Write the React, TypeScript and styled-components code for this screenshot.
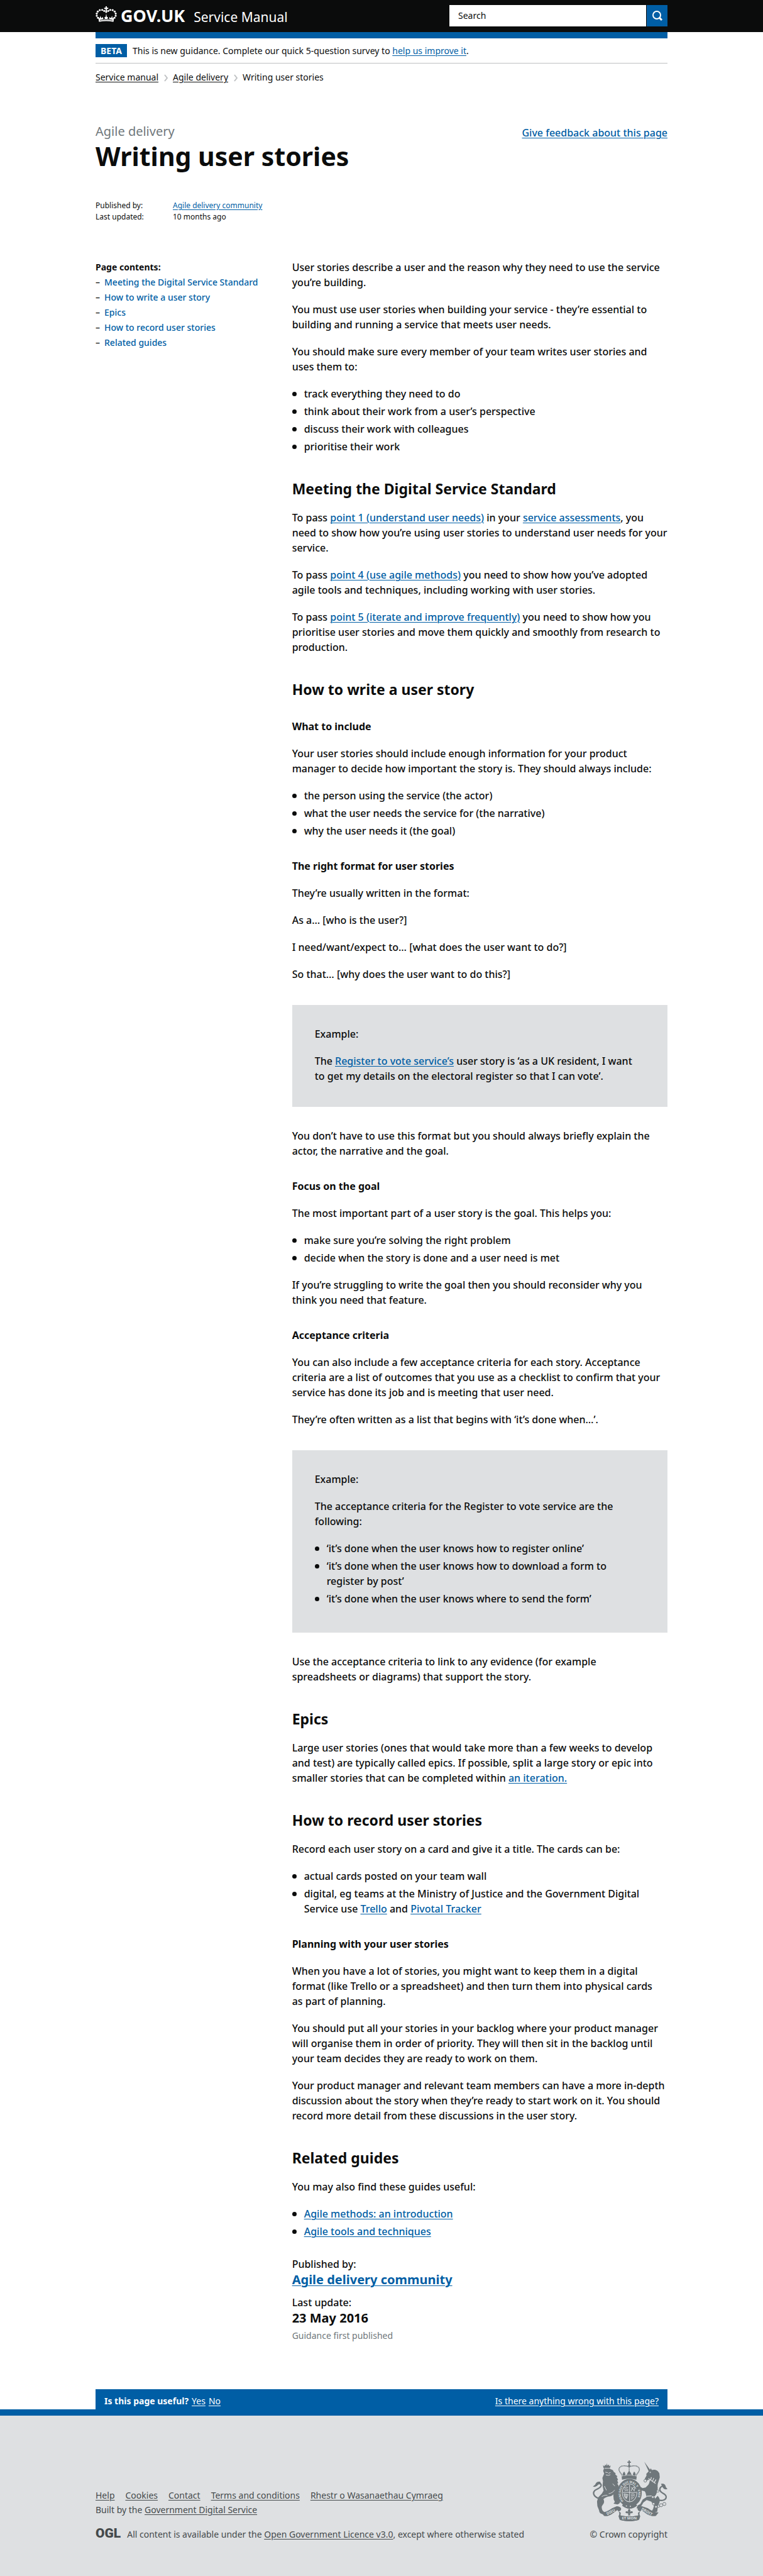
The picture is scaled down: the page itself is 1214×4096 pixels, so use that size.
import React from 'react';
import styled, { createGlobalStyle, css } from 'styled-components';

const color = {
  black: '#0b0c0c',
  blue: '#005ea5',
  white: '#ffffff',
  panel: '#dee0e2',
  border: '#bfc1c3',
  secondary: '#6f777b',
  footer: '#454a4c',
};

const GlobalStyle = createGlobalStyle`
  *, *::before, *::after { box-sizing: border-box; }
  html { -webkit-text-size-adjust: 100%; }
  body {
    margin: 0;
    background: ${color.white};
    color: ${color.black};
    font-family: "Noto Sans", "Open Sans", sans-serif;
    font-size: 16px;
    line-height: 24px;
  }
  h1, h2, h3, p, ul, ol, dl, dd { margin: 0; padding: 0; }
  ul, ol { list-style: none; }
`;

const small = css`
  font-size: 14px;
  line-height: 20px;
  font-weight: 400;
`;

const Container = styled.div`
  width: calc(100% - 30px);
  max-width: 910px;
  margin: 0 auto;
`;

const Link = styled.a<{ $tone?: string }>`
  color: ${(p) => p.$tone ?? color.blue};
  text-decoration: underline;
  text-decoration-thickness: 1px;
  text-underline-offset: 2px;
`;

/* Header */

const Masthead = styled.header`
  background: ${color.black};
  color: ${color.white};
`;

const MastheadRow = styled(Container)`
  display: flex;
  align-items: flex-start;
  justify-content: space-between;
  gap: 30px;
  padding: 8px 0 9px;
`;

const Brand = styled.a`
  display: flex;
  align-items: baseline;
  color: ${color.white};
  text-decoration: none;
  white-space: nowrap;
`;

const BrandMark = styled.svg`
  width: 34px;
  height: 25px;
  margin-right: 6px;
`;

const BrandName = styled.span`
  font-size: 27px;
  line-height: 34px;
  font-weight: 700;
  margin-right: 14px;
`;

const Product = styled.span`
  font-size: 21px;
  line-height: 28px;
`;

const SearchForm = styled.form`
  display: flex;
  gap: 1px;
  flex: 0 1 347px;
  height: 34px;
`;

const SearchInput = styled.input`
  flex: 1;
  min-width: 0;
  border: 0;
  border-radius: 0;
  padding: 0 14px;
  background: ${color.white};
  color: ${color.black};
  font: inherit;
  ${small}
  &::placeholder { color: ${color.black}; opacity: 1; }
`;

const SearchButton = styled.button`
  display: flex;
  align-items: center;
  justify-content: center;
  width: 33px;
  border: 0;
  padding: 0;
  background: ${color.blue};
  color: ${color.white};
  cursor: pointer;
`;

/* Phase banner and breadcrumbs */

const PhaseBanner = styled.div`
  display: flex;
  gap: 9px;
  border-top: 10px solid ${color.blue};
  border-bottom: 1px solid ${color.border};
  padding: 9px 0;
  ${small}
  line-height: 21px;
`;

const PhaseTag = styled.strong`
  width: 50px;
  background: ${color.blue};
  color: ${color.white};
  font-weight: 700;
  text-align: center;
`;

const Crumbs = styled.ol`
  display: flex;
  margin-top: 12px;
  ${small}
`;

const Crumb = styled.li`
  display: flex;
  align-items: center;
`;

const Chevron = styled.svg`
  width: 6px;
  height: 12px;
  margin: 2px 8px 0 9px;
`;

/* Page heading */

const TitleRow = styled.div`
  display: flex;
  justify-content: space-between;
  align-items: flex-start;
  margin-top: 62px;
  font-weight: 500;
`;

const Topic = styled.p`
  color: ${color.secondary};
  font-size: 20px;
  font-weight: 400;
  line-height: 28px;
`;

const Title = styled.h1`
  font-size: 41px;
  line-height: 50px;
  font-weight: 700;
`;

const Feedback = styled.p`
  padding-top: 4px;
`;

const Metadata = styled.dl`
  display: grid;
  grid-template-columns: 123px 1fr;
  margin-top: 45px;
  font-size: 12px;
  line-height: 18px;
`;

/* Body */

const Columns = styled.div`
  display: grid;
  grid-template-columns: 1fr 2fr;
  gap: 14px;
  margin-top: 59px;
`;

const Contents = styled.nav`
  font-size: 14px;
  line-height: 24px;
  font-weight: 500;
`;

const ContentsTitle = styled.h2`
  font-size: 14px;
  line-height: 24px;
  font-weight: 700;
`;

const ContentsItem = styled.li`
  display: flex;
  &::before { content: '–'; width: 14px; }
  a { color: ${color.blue}; text-decoration: none; }
`;

const Article = styled.article`
  min-width: 0;
  font-weight: 500;
`;

const Prose = styled.div`
  > p { margin-bottom: 19px; }
`;

const H2 = styled.h2`
  margin: 40px 0 19px;
  font-size: 23px;
  line-height: 30px;
  font-weight: 700;
`;

const H3 = styled.h3`
  margin: 32px 0 19px;
  font-size: 16px;
  line-height: 24px;
  font-weight: 700;
`;

const Bullets = styled.ul`
  margin-bottom: 19px;

  li {
    margin-bottom: 4px;
    padding-left: 19px;
    text-indent: -19px;
  }
  li::before {
    content: '';
    display: inline-block;
    width: 7px;
    height: 7px;
    margin-right: 12px;
    border-radius: 50%;
    background: ${color.black};
    vertical-align: 2px;
  }
`;

const Example = styled.aside`
  margin: 37px 0 34px;
  padding: 34px 36px 18px;
  background: ${color.panel};

  p { margin-bottom: 19px; }
  ul { margin-bottom: 24px; }
`;

const History = styled.dl`
  margin-top: 28px;

  dd {
    font-size: 20px;
    line-height: 26px;
    font-weight: 700;
  }
  dd + dt { margin-top: 11px; }
`;

const HistoryNote = styled.p`
  margin-top: 5px;
  color: ${color.secondary};
  ${small}
`;

/* Survey bar and footer */

const SurveyBar = styled(Container)`
  display: flex;
  justify-content: space-between;
  margin-top: 75px;
  padding: 9px 14px 3px;
  background: ${color.blue};
  color: ${color.white};
  ${small}
`;

const SurveyLinks = styled.p`
  display: flex;
  gap: 5px;
`;

const Footer = styled.footer`
  border-top: 10px solid ${color.blue};
  background: ${color.panel};
  color: ${color.footer};
  ${small}
`;

const FooterRow = styled(Container)`
  display: flex;
  justify-content: space-between;
  align-items: flex-end;
  padding: 71px 0 60px;
`;

const FooterLinks = styled.ul`
  display: flex;
  flex-wrap: wrap;
  gap: 17px;
  margin-bottom: 3px;
`;

const Licence = styled.div`
  display: flex;
  align-items: baseline;
  gap: 10px;
  margin-top: 17px;
`;

const OglMark = styled.span`
  font-family: Roboto, sans-serif;
  font-size: 21px;
  line-height: 20px;
  font-weight: 900;
`;

const Copyright = styled.div`
  display: flex;
  flex-direction: column;
  align-items: flex-end;
  gap: 11px;
`;

const CrestArt = styled.svg`
  width: 119px;
  height: 97px;
`;

const crownBeads: Array<[number, number]> = [
  [12, 57], [6, 47], [6, 36], [11, 26], [21, 19], [33, 18], [43, 23],
  [94, 57], [100, 47], [100, 36], [95, 26], [85, 19], [73, 18], [63, 23],
];

function Crown() {
  return (
    <BrandMark viewBox="0 0 106 78" aria-hidden="true" fill="#fff">
      {crownBeads.map(([x, y]) => (
        <circle key={`${x}-${y}`} cx={x} cy={y} r="5" />
      ))}
      <path d="M50 0h6v7h7v6h-7v12h-6V13h-7V7h7z" />
      <circle cx="53" cy="28" r="5" />
      <path d="M17 77 13 52l8 8 3-13 5 12 8-6 1 11 9-2-3-9h6l2-11 1-6 1 6 2 11h6l-3 9 9 2 1-11 8 6 5-12 3 13 8-8-4 25c-24-5-48-5-72 0z" />
      <path d="M22 69c20-4 42-4 62 0" stroke={color.black} strokeWidth="3" fill="none" />
    </BrandMark>
  );
}

function Crest() {
  const tone = color.secondary;
  return (
    <CrestArt viewBox="45 65 375 307" aria-hidden="true" fill={tone}>
      {/* central crown */}
      <path d="M225 66h6v6h6v6h-6v10h-6V78h-6v-6h6z" />
      <circle cx="228" cy="93" r="6" />
      <path d="M228 98C210 90 181 90 177 108c-2 12 9 22 17 34M228 98c18-8 47-8 51 10 2 12-9 22-17 34M228 98v36" fill="none" stroke={tone} strokeWidth="5" strokeDasharray="5 2" />
      <path d="M197 143c-3-9 0-17 6-21 5 6 6 12 6 18l7-3c3-8 8-14 12-18 4 4 9 10 12 18l7 3c0-6 1-12 6-18 6 4 9 12 6 21-20-6-42-6-62 0z" />
      <path d="M190 146c24-7 52-7 76 0l-2 17c-24-7-48-7-72 0z" />
      {/* garter and shield */}
      <ellipse cx="230" cy="229" rx="49" ry="58" fill="none" stroke={tone} strokeWidth="25" />
      <ellipse cx="230" cy="229" rx="37" ry="45" fill={tone} stroke={color.panel} strokeWidth="3" />
      <path d="M230 188v84M196 227h68" stroke={color.panel} strokeWidth="3" />
      <g stroke={color.panel} strokeWidth="3" fill="none" strokeLinecap="round">
        <path d="M204 203l8-3 9 3M203 211l9-2 10 3M206 219l7-2 9 2M238 219l6-14 10-7M239 201l15 19M254 202v14M202 235l3 14 9 10 8-20zM208 238l2 14M214 238v16M238 236l9-2 8 3M238 244l9-2 9 3M238 252l7-2 6 3M238 260l8-3" />
      </g>
      <g fill={color.panel} fontFamily="Noto Sans, sans-serif" fontWeight="700" fontSize="15">
        <path id="garter" d="M201 272A44 53 0 1 1 259 272" fill="none" />
        <text><textPath href="#garter" startOffset="2">HONI SOIT QUI MAL Y PENSE</textPath></text>
      </g>
      <path d="M200 281c20 15 42 15 60 0l8 13c-24 20-52 20-76 0z" />
      <circle cx="214" cy="295" r="3" fill={color.panel} />
      <circle cx="234" cy="297" r="3" fill={color.panel} />
      {/* lion */}
      <path d="M99 104l-3-14 8 5 3-9 6 6 2-12 4 12 7-6 2 9 7-4-4 13z" />
      <path d="M101 107h31l1 6h-33z" />
      <path d="M102 113c14-7 34-6 44 2l4 8 10 8-2 5 11 10-4 4 7 12-4 4 5 14-5 3c8 8 10 18 6 31-3 12-5 22-2 36l9 16c5 10-2 19-12 21l-20-4 7-8-6-13-2-24c-5 4-9 7-13 8l-14 2c-13 4-18 8-23 13 6 9 4 20-2 26l-6 10c-1 9 1 18 8 25l12 8-5 6H94c-13-2-16-8-18-20l-8-20-2-24 6-20 19-20 8-14-5-26 2-22-3-16 9-22-5-13 2-7 6-5-5-8z" />
      <g stroke={color.panel} strokeWidth="3" fill="none" strokeLinecap="round">
        <path d="M109 125l10 2M124 130l9-3M112 139l12 2 8-3M146 184l9 10M126 233c12-2 22-8 28-17M104 196l9 19M91 247c8-5 18-7 26-6M122 252c11-2 20-7 26-13" />
      </g>
      <path d="M72 256c-21-8-30-26-17-39 11-10 32-11 32-27 0-9-9-12-18-8" fill="none" stroke={tone} strokeWidth="7" />
      <path d="M82 173c-15-3-22 5-25 15l-12 9c10 4 20-1 25-8 6-5 12-2 18 2z" />
      {/* unicorn */}
      <path d="M304 72l33 46-9 6z" />
      <path d="M332 114l-18 20 2 9 13 2 18-7z" />
      <path d="M329 118l8-13 5 9c18-6 33 4 38 17l2 20-7 23c-4 9-5 20-3 31l-4 18c-2 12-7 20-14 25l10 18 7 16-4 18-10 20-8 12-12-2 12-22 4-15-14-20-23-8-16 12-12 20-10 12-13-3 6-14 13-7 12-22 20-14c-4-10-4-21-10-28l-16-4-10-8-8 2-2 14-9-4 3-19 17-5 15 8 15-3 14-14c4-9 7-17 7-26l-12 3-8 8-8-4 4-14z" />
      <path d="M371 244c10 9 13 20 10 32l-8 20-4 28-17 2 3-10 6-4 3-24-6-28z" />
      <path d="M371 262c22 12 45 2 43-15-2-14-25-15-31-30-4-14 8-24 20-21" fill="none" stroke={tone} strokeWidth="7" />
      <path d="M388 184c16-5 23 4 25 16l8 10c-11 4-19 0-24-9z" />
      <g stroke={color.panel} strokeWidth="4" fill="none">
        <circle cx="334" cy="126" r="1" />
        <path d="M325 157l36 25M340 150l-4 14M352 154l-6 15M363 162l-8 14M316 246l25-2" />
      </g>
      <g fill={color.panel} stroke={tone} strokeWidth="3">
        <circle cx="309" cy="168" r="7" />
        <circle cx="372" cy="220" r="6" />
        <circle cx="347" cy="250" r="6" />
        <circle cx="351" cy="284" r="6" />
        <circle cx="363" cy="299" r="6" />
        <circle cx="376" cy="296" r="6" />
        <circle cx="389" cy="291" r="8" />
        <circle cx="405" cy="285" r="8" />
      </g>
      {/* motto ribbon */}
      <path d="M88 328c18-1 36-9 54-22l24-10c18 1 27 12 18 22-5 6-14 4-15-3l-29 21c-14 9-30 12-39 8zM376 328c-18-1-36-9-54-22l-30-10c-18 1-27 12-18 22 5 6 14 4 15-3l29 21c14 9 36 12 45 8z" />
      <path d="M174 321c7 12 4 19 0 25l6 18c31 10 67 10 98 0l6-18c-4-6-7-13 0-25l-12 8 2 14c-30 7-60 7-90 0l2-14z" />
      <path d="M180 341c32 9 66 9 98 0l-3 25c-31 7-61 7-92 0z" />
      <g fill={color.panel} fontFamily="Noto Sans, sans-serif" fontWeight="700" fontSize="19">
        <text x="191" y="364">ET MON</text>
        <text transform="translate(118 341) rotate(-27)">DIEU</text>
        <text transform="translate(288 314) rotate(30)">DROIT</text>
      </g>
      <path d="M228 308c7 7 8 12 4 19 3-6 10-8 14-3 2 5-3 9-8 7l-6 3 2 9h-12l2-9-6-3c-5 2-10-2-8-7 4-5 11-3 14 3-4-7-3-12 4-19z" />
    </CrestArt>
  );
}

const contents = [
  'Meeting the Digital Service Standard',
  'How to write a user story',
  'Epics',
  'How to record user stories',
  'Related guides',
];

const slug = (text: string) => text.toLowerCase().replace(/ /g, '-');

function Section({ title }: { title: string }) {
  return <H2 id={slug(title)}>{title}</H2>;
}

function BulletList({ items }: { items: React.ReactNode[] }) {
  return (
    <Bullets>
      {items.map((item, i) => (
        <li key={i}>{item}</li>
      ))}
    </Bullets>
  );
}

function Separator() {
  return (
    <Chevron viewBox="0 0 6 12" fill="none" stroke={color.border} strokeWidth="2" aria-hidden="true">
      <path d="M1 1l4 5-4 5" />
    </Chevron>
  );
}

export default function App() {
  return (
    <>
      <GlobalStyle />
      <Masthead>
        <MastheadRow>
          <Brand href="#">
            <Crown />
            <BrandName>GOV.UK</BrandName>
            <Product>Service Manual</Product>
          </Brand>
          <SearchForm role="search" onSubmit={(e) => e.preventDefault()}>
            <SearchInput type="text" aria-label="Search" placeholder="Search" />
            <SearchButton type="submit" aria-label="Submit search">
              <svg width="18" height="18" viewBox="0 0 18 18" fill="none" stroke="currentColor" aria-hidden="true">
                <circle cx="8" cy="8" r="6" strokeWidth="2" />
                <path d="M12 12l4 4" strokeWidth="3" />
              </svg>
            </SearchButton>
          </SearchForm>
        </MastheadRow>
      </Masthead>

      <Container>
        <PhaseBanner>
          <PhaseTag>BETA</PhaseTag>
          <span>
            This is new guidance. Complete our quick 5-question survey to{' '}
            <Link href="#">help us improve it</Link>.
          </span>
        </PhaseBanner>
        <nav aria-label="Breadcrumb">
          <Crumbs>
            <Crumb>
              <Link href="#" $tone={color.black}>Service manual</Link>
              <Separator />
            </Crumb>
            <Crumb>
              <Link href="#" $tone={color.black}>Agile delivery</Link>
              <Separator />
            </Crumb>
            <Crumb>Writing user stories</Crumb>
          </Crumbs>
        </nav>
      </Container>

      <Container as="main">
        <TitleRow>
          <div>
            <Topic>Agile delivery</Topic>
            <Title>Writing user stories</Title>
          </div>
          <Feedback>
            <Link href="#">Give feedback about this page</Link>
          </Feedback>
        </TitleRow>
        <Metadata>
          <dt>Published by:</dt>
          <dd><Link href="#">Agile delivery community</Link></dd>
          <dt>Last updated:</dt>
          <dd>10 months ago</dd>
        </Metadata>

        <Columns>
          <Contents aria-label="Page contents">
            <ContentsTitle>Page contents:</ContentsTitle>
            <ul>
              {contents.map((item) => (
                <ContentsItem key={item}>
                  <a href={`#${slug(item)}`}>{item}</a>
                </ContentsItem>
              ))}
            </ul>
          </Contents>

          <Article>
            <Prose>
              <p>User stories describe a user and the reason why they need to use the service you’re building.</p>
              <p>You must use user stories when building your service - they’re essential to building and running a service that meets user needs.</p>
              <p>You should make sure every member of your team writes user stories and uses them to:</p>
              <BulletList
                items={[
                  'track everything they need to do',
                  'think about their work from a user’s perspective',
                  'discuss their work with colleagues',
                  'prioritise their work',
                ]}
              />

              <Section title={contents[0]} />
              <p>
                To pass <Link href="#">point 1 (understand user needs)</Link> in your{' '}
                <Link href="#">service assessments</Link>, you need to show how you’re using user
                stories to understand user needs for your service.
              </p>
              <p>
                To pass <Link href="#">point 4 (use agile methods)</Link> you need to show how you’ve
                adopted agile tools and techniques, including working with user stories.
              </p>
              <p>
                To pass <Link href="#">point 5 (iterate and improve frequently)</Link> you need to show
                how you prioritise user stories and move them quickly and smoothly from research to
                production.
              </p>

              <Section title={contents[1]} />
              <H3>What to include</H3>
              <p>Your user stories should include enough information for your product manager to decide how important the story is. They should always include:</p>
              <BulletList
                items={[
                  'the person using the service (the actor)',
                  'what the user needs the service for (the narrative)',
                  'why the user needs it (the goal)',
                ]}
              />
              <H3>The right format for user stories</H3>
              <p>They’re usually written in the format:</p>
              <p>As a… [who is the user?]</p>
              <p>I need/want/expect to… [what does the user want to do?]</p>
              <p>So that… [why does the user want to do this?]</p>
              <Example>
                <p>Example:</p>
                <p>
                  The <Link href="#">Register to vote service’s</Link> user story is ‘as a UK resident,
                  I want to{'\u00a0'}get my details on the electoral register so that I can vote’.
                </p>
              </Example>
              <p>You don’t have to use this format but you should always briefly explain the actor, the narrative and the goal.</p>

              <H3>Focus on the goal</H3>
              <p>The most important part of a user story is the goal. This helps you:</p>
              <BulletList
                items={[
                  'make sure you’re solving the right problem',
                  'decide when the story is done and a user need is met',
                ]}
              />
              <p>If you’re struggling to write the goal then you should reconsider why you think you need that feature.</p>

              <H3>Acceptance criteria</H3>
              <p>You can also include a few acceptance criteria for each story. Acceptance criteria are a list of outcomes that you use as a checklist to confirm that your service has done its job and is meeting that user need.</p>
              <p>They’re often written as a list that begins with ‘it’s done when…’.</p>
              <Example>
                <p>Example:</p>
                <p>The acceptance criteria for the Register to vote service are the following:</p>
                <BulletList
                  items={[
                    '‘it’s done when the user knows how to register online’',
                    '‘it’s done when the user knows how to download a form to register by post’',
                    '‘it’s done when the user knows where to send the form’',
                  ]}
                />
              </Example>
              <p>Use the acceptance criteria to link to any evidence (for example spreadsheets{'\u00a0'}or diagrams) that support the story.</p>

              <Section title={contents[2]} />
              <p>
                Large user stories (ones that would take more than a few weeks to develop and test) are
                typically called epics. If possible, split a large story or epic into smaller stories
                that can be completed within <Link href="#">an iteration.</Link>
              </p>

              <Section title={contents[3]} />
              <p>Record each user story on a card and give it a title. The cards can be:</p>
              <BulletList
                items={[
                  'actual cards posted on your team wall',
                  <>
                    digital, eg teams at the Ministry of Justice and the Government Digital Service
                    use <Link href="#">Trello</Link> and <Link href="#">Pivotal Tracker</Link>
                  </>,
                ]}
              />
              <H3>Planning with your user stories</H3>
              <p>When you have a lot of stories, you might want to keep them in a digital format (like Trello or a spreadsheet) and then turn them into physical cards as{'\u00a0'}part of planning.</p>
              <p>You should put all your stories in your backlog where your product manager will organise them in order of priority. They will then sit in the backlog until your team decides they are ready to work on them.</p>
              <p>Your product manager and relevant team members can have a more in-depth discussion about the story when they’re ready to start work on it. You should record more detail from these discussions in the user story.</p>

              <Section title={contents[4]} />
              <p>You may also find these guides useful:</p>
              <BulletList
                items={[
                  <Link href="#">Agile methods: an introduction</Link>,
                  <Link href="#">Agile tools and techniques</Link>,
                ]}
              />
            </Prose>

            <History>
              <dt>Published by:</dt>
              <dd><Link href="#">Agile delivery community</Link></dd>
              <dt>Last update:</dt>
              <dd>23 May 2016</dd>
            </History>
            <HistoryNote>Guidance first published</HistoryNote>
          </Article>
        </Columns>
      </Container>

      <SurveyBar>
        <SurveyLinks>
          <strong>Is this page useful?</strong>
          <Link href="#" $tone={color.white}>Yes</Link>
          <Link href="#" $tone={color.white}>No</Link>
        </SurveyLinks>
        <Link href="#" $tone={color.white}>Is there anything wrong with this page?</Link>
      </SurveyBar>

      <Footer>
        <FooterRow>
          <div>
            <FooterLinks>
              {['Help', 'Cookies', 'Contact', 'Terms and conditions', 'Rhestr o Wasanaethau Cymraeg'].map((item) => (
                <li key={item}>
                  <Link href="#" $tone={color.footer}>{item}</Link>
                </li>
              ))}
            </FooterLinks>
            <p>
              Built by the <Link href="#" $tone={color.footer}>Government Digital Service</Link>
            </p>
            <Licence>
              <OglMark>OGL</OglMark>
              <p>
                All content is available under the{' '}
                <Link href="#" $tone={color.footer}>Open Government Licence v3.0</Link>, except where
                otherwise stated
              </p>
            </Licence>
          </div>
          <Copyright>
            <Crest />
            <span>© Crown copyright</span>
          </Copyright>
        </FooterRow>
      </Footer>
    </>
  );
}
